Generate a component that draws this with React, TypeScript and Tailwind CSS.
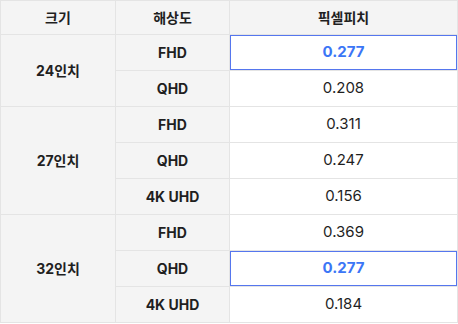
import React from "react";

const groups = [
  { size: "24인치", rows: [{ res: "FHD", pitch: "0.277", hi: true }, { res: "QHD", pitch: "0.208" }] },
  {
    size: "27인치",
    rows: [
      { res: "FHD", pitch: "0.311" },
      { res: "QHD", pitch: "0.247" },
      { res: "4K UHD", pitch: "0.156" },
    ],
  },
  {
    size: "32인치",
    rows: [
      { res: "FHD", pitch: "0.369" },
      { res: "QHD", pitch: "0.277", hi: true },
      { res: "4K UHD", pitch: "0.184" },
    ],
  },
];

export default function App() {
  return (
    <div className="w-[458px] h-[324px] bg-white font-['Inter','Noto_Sans_CJK_KR',sans-serif] text-[#1f1f1f]">
      <table className="w-[458px] border-collapse table-fixed">
        <colgroup>
          <col className="w-[115px]" />
          <col className="w-[114px]" />
          <col />
        </colgroup>
        <thead>
          <tr className="h-[34px] bg-[#f4f4f4] text-[14px]">
            <th className="border border-[#e4e4e4] font-semibold">크기</th>
            <th className="border border-[#e4e4e4] font-semibold">해상도</th>
            <th className="border border-[#e4e4e4] font-semibold">픽셀피치</th>
          </tr>
        </thead>
        <tbody>
          {groups.map((g) =>
            g.rows.map((r, i) => (
              <tr key={g.size + r.res} className="h-[36px]">
                {i === 0 && (
                  <td
                    rowSpan={g.rows.length}
                    className="border border-[#e4e4e4] bg-[#f4f4f4] text-center text-[14px] font-bold"
                  >
                    {g.size}
                  </td>
                )}
                <td className="border border-[#e4e4e4] bg-[#f4f4f4] text-center text-[14px] font-bold">
                  {r.res}
                </td>
                <td
                  className={
                    r.hi
                      ? "border border-[#e4e4e4] text-center text-[15px] font-bold text-[#3b76f6] shadow-[inset_0_0_0_1px_#5576ee]"
                      : "border border-[#e4e4e4] text-center text-[15px]"
                  }
                >
                  {r.pitch}
                </td>
              </tr>
            ))
          )}
        </tbody>
      </table>
    </div>
  );
}
